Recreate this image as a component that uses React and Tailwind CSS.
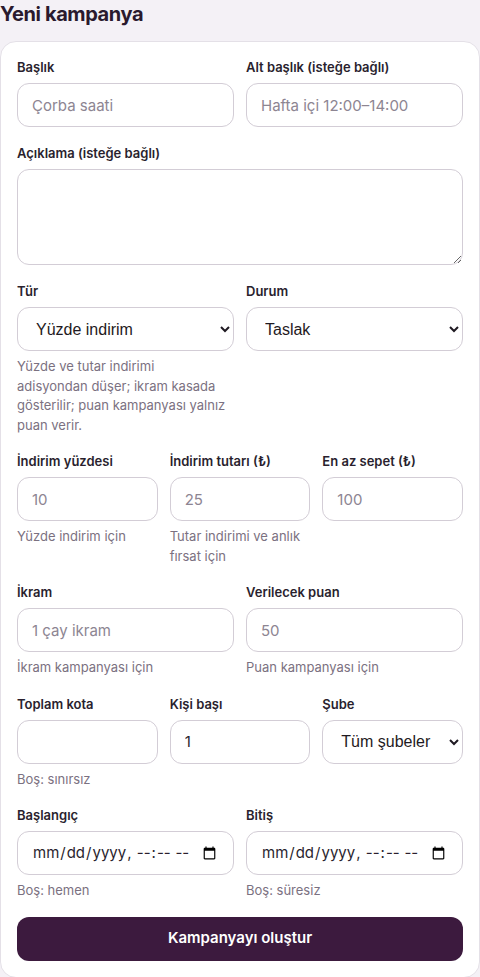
import React from "react";

const font = { fontFamily: "Inter, 'Noto Sans', sans-serif" };

function Label({ children }) {
  return <label className="block text-[13px] font-semibold leading-5 text-[#2a1f2e]">{children}</label>;
}

function Help({ children }) {
  return <p className="mt-1.5 text-[13px] leading-[19.5px] text-[#7b7181]">{children}</p>;
}

const inputCls =
  "mt-1.5 block h-11 w-full rounded-xl border border-[#d3cdd6] bg-white px-[14px] text-[15px] text-[#2a1f2e] placeholder:text-[#8d8592] outline-none";

const selectCls =
  "mt-1.5 block h-11 w-full rounded-xl border border-[#d3cdd6] bg-white pl-[14px] pr-2 text-[16px] text-[#1f1a22] outline-none font-['Liberation_Sans',Arial,sans-serif]";

function Field({ label, help, children }) {
  return (
    <div className="min-w-0">
      <Label>{label}</Label>
      {children}
      {help && <Help>{help}</Help>}
    </div>
  );
}

export default function App() {
  return (
    <div className="min-h-screen bg-[#f4f1f6]" style={font}>
      <h2 className="text-[20px] font-bold leading-7 tracking-[-0.4px] text-[#2a1a2e]">Yeni kampanya</h2>
      <div className="mt-[13px] rounded-2xl border border-[#e4e0e7] bg-white px-4 pb-4 pt-[15px]">
        <div className="flex flex-col gap-4">
          <div className="grid grid-cols-2 gap-3">
            <Field label="Başlık">
              <input className={inputCls} placeholder="Çorba saati" />
            </Field>
            <Field label="Alt başlık (isteğe bağlı)">
              <input className={inputCls} placeholder="Hafta içi 12:00–14:00" />
            </Field>
          </div>
          <Field label="Açıklama (isteğe bağlı)">
            <textarea className="mt-1.5 block h-24 w-full rounded-xl border border-[#d3cdd6] bg-white px-[14px] py-2 text-[15px] outline-none" />
          </Field>
          <div className="grid grid-cols-2 gap-3">
            <Field
              label="Tür"
              help={
                <>
                  Yüzde ve tutar indirimi
                  <br />
                  adisyondan düşer; ikram kasada
                  <br />
                  gösterilir; puan kampanyası yalnız
                  <br />
                  puan verir.
                </>
              }
            >
              <select className={selectCls} defaultValue="pct">
                <option value="pct">Yüzde indirim</option>
                <option value="amt">Tutar indirimi</option>
                <option value="gift">İkram</option>
                <option value="pts">Puan</option>
              </select>
            </Field>
            <Field label="Durum">
              <select className={selectCls} defaultValue="draft">
                <option value="draft">Taslak</option>
                <option value="active">Aktif</option>
              </select>
            </Field>
          </div>
          <div className="grid grid-cols-3 gap-3">
            <Field label="İndirim yüzdesi" help="Yüzde indirim için">
              <input className={inputCls} placeholder="10" />
            </Field>
            <Field label="İndirim tutarı (₺)" help="Tutar indirimi ve anlık fırsat için">
              <input className={inputCls} placeholder="25" />
            </Field>
            <Field label="En az sepet (₺)">
              <input className={inputCls} placeholder="100" />
            </Field>
          </div>
          <div className="grid grid-cols-2 gap-3">
            <Field label="İkram" help="İkram kampanyası için">
              <input className={inputCls} placeholder="1 çay ikram" />
            </Field>
            <Field label="Verilecek puan" help="Puan kampanyası için">
              <input className={inputCls} placeholder="50" />
            </Field>
          </div>
          <div className="grid grid-cols-3 gap-3">
            <Field label="Toplam kota" help="Boş: sınırsız">
              <input className={inputCls} />
            </Field>
            <Field label="Kişi başı">
              <input className={inputCls} defaultValue="1" />
            </Field>
            <Field label="Şube">
              <select className={selectCls} defaultValue="all">
                <option value="all">Tüm şubeler</option>
              </select>
            </Field>
          </div>
          <div className="grid grid-cols-2 gap-3">
            <Field label="Başlangıç" help="Boş: hemen">
              <input type="datetime-local" className={inputCls} />
            </Field>
            <Field label="Bitiş" help="Boş: süresiz">
              <input type="datetime-local" className={inputCls} />
            </Field>
          </div>
          <button className="h-11 w-full rounded-xl bg-[#3c1a3e] text-[15px] font-semibold text-white">
            Kampanyayı oluştur
          </button>
        </div>
      </div>
    </div>
  );
}
